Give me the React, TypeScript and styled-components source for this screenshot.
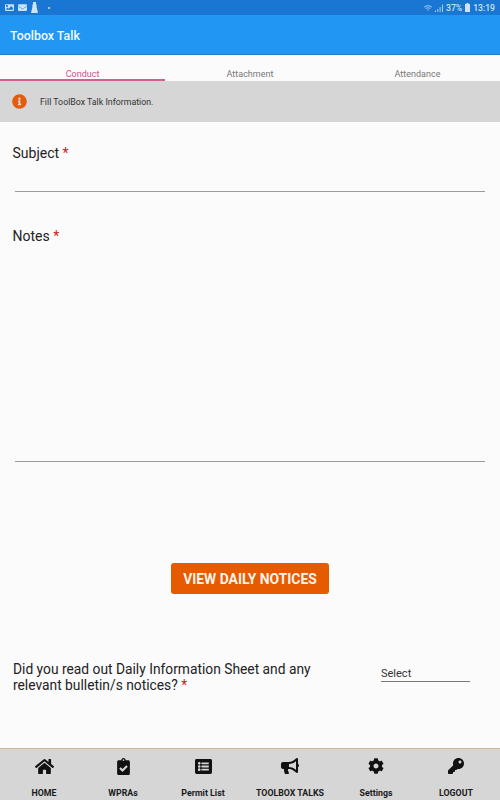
import React from "react";
import styled, { createGlobalStyle } from "styled-components";
import { FaHome, FaClipboardCheck, FaListAlt, FaBullhorn, FaCog, FaKey, FaInfoCircle, FaImage, FaEnvelope, FaWifi } from "react-icons/fa";

const Global = createGlobalStyle`
  html, body { margin: 0; padding: 0; }
  body { font-family: Roboto, "Liberation Sans", sans-serif; background: #fcfbfc; }
`;
const Page = styled.div`
  width: 500px; height: 800px; display: flex; flex-direction: column; overflow: hidden; background: #fcfbfc;
`;
const StatusBar = styled.div`
  height: 15px; background: #1976d2; display: flex; align-items: center; justify-content: space-between;
  padding: 0 5px; color: #cfe3f6; flex: none;
`;
const StatusLeft = styled.div`
  display: flex; align-items: center; gap: 4px;
`;
const StatusRight = styled.div`
  display: flex; align-items: center; gap: 3px; font-size: 8.6px; font-weight: 500;
`;
const Dot = styled.span`
  width: 2px; height: 2px; border-radius: 50%; background: #cfe3f6; margin-left: 6px;
`;
const Header = styled.header`
  height: 40px; box-sizing: border-box; background: #2196f3; border-bottom: 1px solid #1a80cf; flex: none;
  display: flex; align-items: center; padding: 1px 0 0 10px; color: #f2f9ff; font-size: 12.4px; font-weight: 500;
`;
const Tabs = styled.nav`
  height: 26px; display: grid; grid-template-columns: 165px 170px 165px; flex: none;
`;
const Tab = styled.div<{ $active?: boolean }>`
  display: flex; align-items: flex-end; justify-content: center; font-size: 9px; line-height: 10px;
  color: ${(p) => (p.$active ? "#cf4f8f" : "#777")};
  border-bottom: 2px solid ${(p) => (p.$active ? "#d2608f" : "transparent")};
`;
const Info = styled.div`
  height: 41px; background: #d6d6d6; flex: none; display: flex; align-items: center; gap: 13px; padding-left: 12px;
  font-size: 8.8px; color: #333;
`;
const Main = styled.main`
  flex: 1; display: flex; flex-direction: column; min-height: 0;
`;
const Label = styled.label`
  display: block; font-size: 14px; color: #222; line-height: 17px; margin-left: 12.5px;
`;
const Star = styled.span`
  color: #d01818;
`;
const Line = styled.div<{ $height: number }>`
  height: ${(p) => p.$height}px; margin: 0 15px; border-bottom: 1px solid #9a9a9a;
`;
const SubjectField = styled.div`
  padding-top: 23px;
`;
const NotesField = styled.div`
  padding-top: 36px;
`;
const ButtonRow = styled.div`
  display: flex; justify-content: center; padding-top: 101px;
`;
const Button = styled.button`
  width: 158px; height: 31px; border: 0; border-radius: 3px; background: #e65a00; color: #fdf3ea;
  font: 700 13.9px Roboto, sans-serif; padding: 0;
`;
const Question = styled.div`
  display: flex; justify-content: space-between; padding: 67px 30px 0 13px;
`;
const QuestionText = styled.div`
  width: 330px; font-size: 13.8px; line-height: 16px; color: #222;
`;
const SelectBox = styled.div`
  width: 89px; height: 21px; box-sizing: border-box; border-bottom: 1px solid #777; font-size: 11px; color: #333;
  padding-top: 6px;
`;
const BottomNav = styled.nav`
  height: 52px; box-sizing: border-box; flex: none; background: #d6d6d6; border-top: 1px solid #d2b69c; display: grid;
  grid-template-columns: 88px 70px 90px 84px 88px 72px; margin-top: auto;
`;
const NavItem = styled.div`
  display: flex; flex-direction: column; align-items: center; color: #111; padding-top: 8px;
`;
const NavIcon = styled.div`
  height: 18px; display: flex; align-items: center; justify-content: center;
`;
const NavLabel = styled.div`
  font-size: 8.8px; font-weight: 700; margin-top: 13px; white-space: nowrap; color: #1a1a1a;
`;

const items = [
  { label: "HOME", icon: <FaHome size={19} /> },
  { label: "WPRAs", icon: <FaClipboardCheck size={17} /> },
  { label: "Permit List", icon: <FaListAlt size={17} /> },
  { label: "TOOLBOX TALKS", icon: <FaBullhorn size={18} /> },
  { label: "Settings", icon: <FaCog size={16} /> },
  { label: "LOGOUT", icon: <FaKey size={16} /> },
];

const TowerIcon = () => (
  <svg width="7" height="11" viewBox="0 0 7 11" fill="currentColor">
    <path d="M2 0h3v2l.6 1v2L7 11H0l1.4-6V3L2 2z" />
  </svg>
);
const SignalIcon = () => (
  <svg width="8" height="8" viewBox="0 0 8 8" fill="currentColor" opacity="0.8">
    <rect x="0" y="6.5" width="1" height="1.5" />
    <rect x="2.3" y="5" width="1" height="3" />
    <rect x="4.6" y="3" width="1" height="5" />
    <rect x="7" y="0.5" width="1" height="7.5" />
  </svg>
);
const BatteryIcon = () => (
  <svg width="5" height="9" viewBox="0 0 5 9" fill="currentColor">
    <path d="M1.5 0h2v1H5v8H0V1h1.500z" />
  </svg>
);

export default function App() {
  return (
    <Page>
      <Global />
      <StatusBar>
        <StatusLeft>
          <FaImage size={9} />
          <FaEnvelope size={9} />
          <TowerIcon />
          <Dot />
        </StatusLeft>
        <StatusRight>
          <FaWifi size={8} style={{ opacity: 0.7 }} />
          <SignalIcon />
          <span>37%</span>
          <BatteryIcon />
          <span>13:19</span>
        </StatusRight>
      </StatusBar>
      <Header>Toolbox Talk</Header>
      <Tabs>
        <Tab $active>Conduct</Tab>
        <Tab>Attachment</Tab>
        <Tab>Attendance</Tab>
      </Tabs>
      <Info>
        <FaInfoCircle size={15} color="#e65a0a" />
        Fill ToolBox Talk Information.
      </Info>
      <Main>
        <SubjectField>
          <Label>Subject <Star>*</Star></Label>
          <Line $height={29} />
        </SubjectField>
        <NotesField>
          <Label>Notes <Star>*</Star></Label>
          <Line $height={216} />
        </NotesField>
        <ButtonRow>
          <Button>VIEW DAILY NOTICES</Button>
        </ButtonRow>
        <Question>
          <QuestionText>
            Did you read out Daily Information Sheet and any relevant bulletin/s notices? <Star>*</Star>
          </QuestionText>
          <SelectBox>Select</SelectBox>
        </Question>
      </Main>
      <BottomNav>
        {items.map((it) => (
          <NavItem key={it.label}>
            <NavIcon>{it.icon}</NavIcon>
            <NavLabel>{it.label}</NavLabel>
          </NavItem>
        ))}
      </BottomNav>
    </Page>
  );
}
